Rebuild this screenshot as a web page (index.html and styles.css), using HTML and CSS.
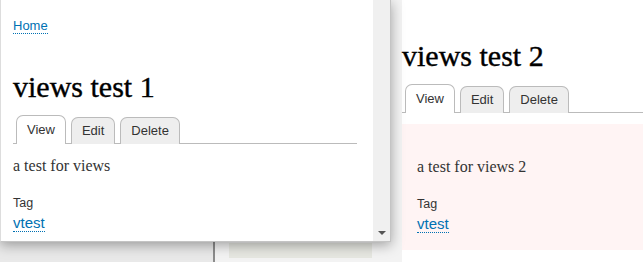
FILE: index.html
```html
<!DOCTYPE html>
<html lang="en">
<head>
  <meta charset="utf-8" />
  <title>views test 2</title>
  <link rel="stylesheet" href="styles.css">
</head>

<body>
  <!-- page behind the overlay -->
  <div class="page">
    <aside class="sidebar"></aside>
    <div class="middle">
      <div class="block"></div>
    </div>
    <main class="content">
      <h1 class="title">views test 2</h1>
      <ul class="tabs">
        <li class="active"><a href="#">View</a></li>
        <li><a href="#">Edit</a></li>
        <li><a href="#">Delete</a></li>
      </ul>
      <div class="node unpublished">
        <p class="body">a test for views 2</p>
        <div class="field-label">Tag</div>
        <a class="tag" href="#">vtest</a>
      </div>
    </main>
  </div>

  <!-- overlay window -->
  <div class="overlay">
    <div class="overlay-body">
      <div class="breadcrumb"><a href="#">Home</a></div>
      <h1 class="title">views test 1</h1>
      <ul class="tabs">
        <li class="active"><a href="#">View</a></li>
        <li><a href="#">Edit</a></li>
        <li><a href="#">Delete</a></li>
      </ul>
      <div class="node">
        <p class="body">a test for views</p>
        <div class="field-label">Tag</div>
        <a class="tag" href="#">vtest</a>
      </div>
    </div>
    <div class="scrollbar">
      <span class="arrow"></span>
    </div>
  </div>
</body>
</html>
```

FILE: styles.css
```css
* {
  margin: 0;
  padding: 0;
  box-sizing: border-box;
}

body {
  background: #fff;
  color: #333;
  font-family: "Liberation Sans", Arial, sans-serif;
  overflow: hidden;
  height: 262px;
}

a {
  color: #0071b3;
  text-decoration: none;
}

/* background page */
.page {
  display: flex;
  height: 262px;
}
.sidebar {
  width: 215px;
  background: #e9e9e9;
  border-right: 2px solid #8c8c8c;
}
.middle {
  width: 187px;
  padding: 243px 30px 0 14px;
  background: #f3f3f3;
}
.middle .block {
  height: 15px;
  background: #e6e7e1;
}
.content {
  flex: 1;
  padding-top: 39px;
}

/* shared node styles */
.title {
  font-family: "Liberation Serif", Georgia, serif;
  font-size: 30px;
  font-weight: normal;
  color: #000;
  line-height: 33px;
  -webkit-text-stroke: 0.4px #000;
}
.tabs {
  list-style: none;
  display: flex;
  align-items: flex-end;
  gap: 5px;
  margin-top: 12px;
  padding-left: 3px;
  border-bottom: 1px solid #bbb;
  height: 29px;
}
.tabs li {
  height: 27px;
  margin-bottom: -1px;
  background: #eee;
  border: 1px solid #bbb;
  border-bottom: none;
  border-radius: 7px 7px 0 0;
}
.tabs li.active {
  height: 29px;
  background: #fff;
}
.tabs li a {
  display: block;
  padding: 0 10px;
  font-size: 13px;
  line-height: 26px;
  color: #333;
}
.tabs li.active a {
  line-height: 27px;
}

.node .body {
  font-family: "Liberation Serif", Georgia, serif;
  font-size: 16px;
  line-height: 18px;
  margin-bottom: 21px;
}
.field-label {
  font-size: 12.5px;
  line-height: 15px;
  margin-bottom: 3px;
}
.tag {
  font-size: 15px;
  line-height: 17px;
  border-bottom: 1px dotted #0071b3;
}

.content .node {
  margin-top: 11px;
  background: #fff4f4;
  padding: 34px 15px 20px;
  height: 126px;
}

/* overlay window */
.overlay {
  position: absolute;
  top: 0;
  left: 0;
  width: 391px;
  height: 242px;
  display: flex;
  background: #fff;
  border-left: 1px solid #ddd;
  border-right: 1px solid #c4c4c4;
  border-bottom: 1px solid #c4c4c4;
  box-shadow: 0 3px 12px rgba(0, 0, 0, 0.35);
}
.overlay-body {
  flex: 1;
  padding: 18px 16px 0 12px;
}
.breadcrumb {
  font-size: 13px;
  line-height: 16px;
  margin-bottom: 36px;
}
.breadcrumb a {
  border-bottom: 1px dotted #0071b3;
}
.overlay .node {
  padding-top: 13px;
}
.scrollbar {
  width: 17px;
  background: #f0f0f0;
  display: flex;
  align-items: flex-end;
  justify-content: center;
  padding-bottom: 6px;
}
.arrow {
  width: 0;
  height: 0;
  border-left: 4px solid transparent;
  border-right: 4px solid transparent;
  border-top: 4px solid #555;
}
```
